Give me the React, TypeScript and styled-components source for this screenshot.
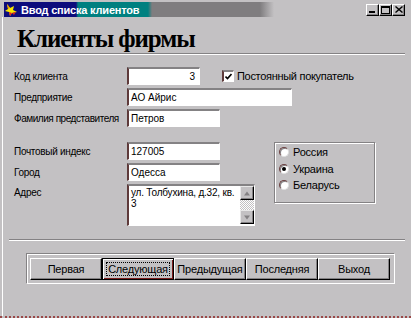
import React from "react";
import styled, { createGlobalStyle, css } from "styled-components";

const GlobalStyle = createGlobalStyle`
  html, body { margin: 0; padding: 0; background: #c3c1c3; }
  body { font-family: "Liberation Sans", Arial, sans-serif; color: #000; }
  * { box-sizing: border-box; }
`;

const Frame = styled.div`
  width: 411px;
  height: 318px;
  background: #c3c1c3;
  padding-top: 2px;
  display: flex;
  flex-direction: column;
  border-bottom: 2px dotted #9a4848;
  overflow: hidden;
`;

const TitleBar = styled.div`
  height: 15px;
  margin: 0 6px 0 4px;
  display: flex;
  align-items: center;
  background: linear-gradient(
    to right,
    #0c0c7c 0px,
    #0c0c7c 72px,
    #008080 74px,
    #008080 144px,
    #7f7d7f 148px,
    #7f7d7f 256px,
    #c3c1c3 270px
  );
`;

const TitleIcon = styled.svg`
  width: 14px;
  height: 14px;
  margin-left: 1px;
  flex: none;
`;

const TitleText = styled.span`
  color: #fff;
  font-weight: bold;
  font-size: 11px;
  margin-left: 2px;
  white-space: nowrap;
  letter-spacing: -0.2px;
`;

const WinButtons = styled.div`
  margin-left: auto;
  display: flex;
`;

const WinButton = styled.div`
  width: 13px;
  height: 12px;
  background: #c3c1c3;
  border: 1px solid;
  border-color: #fff #000 #000 #fff;
  box-shadow: inset -1px -1px 0 #848284;
  display: flex;
  align-items: center;
  justify-content: center;
`;

const Client = styled.div`
  flex: 1;
  margin-left: 2px;
  border-left: 1px solid #fff;
  display: flex;
  flex-direction: column;
`;

const Heading = styled.h1`
  margin: 8px 0 0 14px;
  font-family: "Liberation Serif", "Times New Roman", serif;
  font-weight: bold;
  font-size: 25px;
  letter-spacing: -1.1px;
  line-height: 28px;
  height: 28px;
`;

const Separator = styled.div<{ $top: number }>`
  margin: ${(p) => p.$top}px 6px 0 6px;
  height: 2px;
  border-top: 1px solid #848284;
  border-bottom: 1px solid #fff;
`;

const Form = styled.div`
  padding-left: 11px;
  margin-top: 12px;
  display: flex;
  flex-direction: column;
`;

const Rows = styled.div`
  display: flex;
  flex-direction: column;
  gap: 3px;
`;

const Row = styled.div<{ $top?: boolean }>`
  display: flex;
  align-items: ${(p) => (p.$top ? "flex-start" : "center")};
`;

const Label = styled.div<{ $pad?: number; $tight?: boolean }>`
  width: 113px;
  font-size: 10px;
  white-space: nowrap;
  letter-spacing: ${(p) => (p.$tight ? "-0.45px" : "-0.3px")};
  padding-top: ${(p) => p.$pad ?? 0}px;
`;

const sunken = css`
  background: #fff;
  border-top: 2px solid #848284;
  border-left: 2px solid #5e3a3a;
  border-right: 1px solid #fff;
  border-bottom: 1px solid #fff;
`;

const Field = styled.div<{ $w: number; $right?: boolean }>`
  ${sunken}
  width: ${(p) => p.$w}px;
  height: 18px;
  font-size: 10px;
  line-height: 15px;
  padding: 0 4px 0 2px;
  text-align: ${(p) => (p.$right ? "right" : "left")};
  white-space: nowrap;
  overflow: hidden;
`;

const CheckWrap = styled.label`
  display: flex;
  align-items: center;
  margin-left: 22px;
  font-size: 11px;
  letter-spacing: -0.3px;
  gap: 3px;
  white-space: nowrap;
`;

const CheckBox = styled.span`
  ${sunken}
  width: 12px;
  height: 12px;
  display: flex;
  align-items: center;
  justify-content: center;
`;

const Lower = styled.div`
  margin-top: 15px;
  display: flex;
  align-items: flex-start;
`;

const Memo = styled.div`
  ${sunken}
  width: 128px;
  height: 42px;
  display: flex;
`;

const MemoText = styled.div`
  flex: 1;
  font-size: 10px;
  line-height: 11px;
  padding: 1px 0 0 2px;
  white-space: pre-line;
  letter-spacing: -0.2px;
`;

const ScrollBar = styled.div`
  width: 14px;
  display: flex;
  flex-direction: column;
  margin-bottom: 1px;
`;

const ScrollBtn = styled.div`
  width: 14px;
  height: 14px;
  background: #c3c1c3;
  border: 1px solid;
  border-color: #e8e8e8 #000 #000 #e8e8e8;
  box-shadow: inset -1px -1px 0 #848284;
  display: flex;
  align-items: center;
  justify-content: center;
  flex: none;
`;

const ScrollTrack = styled.div`
  flex: 1;
  background: repeating-conic-gradient(#fff 0 25%, #c3c1c3 0 50%) 0 0 / 2px 2px;
`;

const RadioGroup = styled.div`
  margin-left: 19px;
  width: 101px;
  height: 61px;
  border: 1px solid #848284;
  box-shadow: 1px 1px 0 #fff, inset 1px 1px 0 #fff;
  padding: 1px 0 0 4px;
  display: flex;
  flex-direction: column;
`;

const RadioItem = styled.div`
  height: 16.5px;
  display: flex;
  align-items: center;
  gap: 4px;
  font-size: 11px;
  letter-spacing: -0.2px;
`;

const RadioDot = styled.span<{ $on?: boolean }>`
  width: 10px;
  height: 10px;
  border-radius: 50%;
  background: #fff;
  border: 1px solid;
  border-color: #6a4040 #e0e0e0 #e0e0e0 #6a4040;
  box-shadow: inset 1px 1px 0 #848284;
  display: flex;
  align-items: center;
  justify-content: center;
  &::after {
    content: "";
    width: 4px;
    height: 4px;
    border-radius: 50%;
    background: ${(p) => (p.$on ? "#000" : "transparent")};
  }
`;

const Panel = styled.div`
  margin: 12px 0 0 23px;
  width: 369px;
  height: 31px;
  border-top: 1px solid #848284;
  border-left: 1px solid #848284;
  border-right: 1px solid #fff;
  border-bottom: 1px solid #fff;
  box-shadow: inset 1px 1px 0 #fff;
  padding: 4px 3px 2px 3px;
  display: flex;
`;

const Button = styled.button<{ $focus?: boolean }>`
  width: 72px;
  height: 22px;
  flex: none;
  background: #c3c1c3;
  font-family: "Liberation Sans", Arial, sans-serif;
  font-size: 11px;
  letter-spacing: -0.2px;
  color: #000;
  padding: 0;
  border: 1px solid;
  border-color: #fff #000 #000 #fff;
  box-shadow: inset -1px -1px 0 #848284;
  position: relative;
  ${(p) =>
    p.$focus &&
    css`
      border: 1px solid #000;
      box-shadow: inset 1px 1px 0 #fff, inset -1px -1px 0 #7a1c1c;
      &::after {
        content: "";
        position: absolute;
        inset: 3px;
        border: 1px dotted #000;
      }
    `}
`;

const Triangle = ({ up }: { up?: boolean }) => (
  <svg width="8" height="5" viewBox="0 0 8 5">
    <polygon
      points={up ? "1,5 4,1 7,5" : "1,0 4,4 7,0"}
      fill="#848284"
      transform={up ? "translate(0,-0.5)" : "translate(0,0.5)"}
    />
  </svg>
);

export default function App() {
  return (
    <>
      <GlobalStyle />
      <Frame>
        <TitleBar>
          <TitleIcon viewBox="0 0 14 14">
            <polygon points="2,1 5,5 9,3 8,7 12,9 7,10 5,13 4,9 0,8 3,6" fill="#f8e800" />
            <polygon points="4,9 5,13 7,10 9,12 11,9 7,10" fill="#e02020" />
            <polygon points="2,1 5,5 3,6" fill="#f0a000" />
          </TitleIcon>
          <TitleText>Ввод списка клиентов</TitleText>
          <WinButtons>
            <WinButton>
              <svg width="7" height="7" viewBox="0 0 7 7">
                <rect x="0" y="5" width="6" height="2" fill="#000" />
              </svg>
            </WinButton>
            <WinButton>
              <svg width="9" height="8" viewBox="0 0 9 8">
                <rect x="0.5" y="0.5" width="8" height="7" fill="none" stroke="#000" />
                <rect x="0" y="0" width="9" height="2" fill="#000" />
              </svg>
            </WinButton>
            <WinButton>
              <svg width="8" height="7" viewBox="0 0 8 7">
                <path d="M0.5 0.5 L7.5 6.5 M7.5 0.5 L0.5 6.5" stroke="#000" strokeWidth="1.4" />
              </svg>
            </WinButton>
          </WinButtons>
        </TitleBar>
        <Client>
          <Heading>Клиенты фирмы</Heading>
          <Separator $top={0} />
          <Form>
            <Rows>
              <Row>
                <Label>Код клиента</Label>
                <Field $w={73} $right>
                  3
                </Field>
                <CheckWrap>
                  <CheckBox>
                    <svg width="7" height="7" viewBox="0 0 7 7">
                      <path d="M0.5 3.5 L2.5 5.5 L6.5 1" stroke="#000" strokeWidth="1.6" fill="none" />
                    </svg>
                  </CheckBox>
                  Постоянный покупатель
                </CheckWrap>
              </Row>
              <Row>
                <Label>Предприятие</Label>
                <Field $w={165}>АО Айрис</Field>
              </Row>
              <Row>
                <Label $tight>Фамилия представителя</Label>
                <Field $w={93}>Петров</Field>
              </Row>
            </Rows>
            <Lower>
              <Rows>
                <Row>
                  <Label>Почтовый индекс</Label>
                  <Field $w={93}>127005</Field>
                </Row>
                <Row>
                  <Label>Город</Label>
                  <Field $w={93}>Одесса</Field>
                </Row>
                <Row $top>
                  <Label $pad={3}>Адрес</Label>
                  <Memo>
                    <MemoText>{"ул. Толбухина, д.32, кв.\n3"}</MemoText>
                    <ScrollBar>
                      <ScrollBtn>
                        <Triangle up />
                      </ScrollBtn>
                      <ScrollTrack />
                      <ScrollBtn>
                        <Triangle />
                      </ScrollBtn>
                    </ScrollBar>
                  </Memo>
                </Row>
              </Rows>
              <RadioGroup>
                <RadioItem>
                  <RadioDot />
                  Россия
                </RadioItem>
                <RadioItem>
                  <RadioDot $on />
                  Украина
                </RadioItem>
                <RadioItem>
                  <RadioDot />
                  Беларусь
                </RadioItem>
              </RadioGroup>
            </Lower>
          </Form>
          <Separator $top={13} />
          <Panel>
            <Button>Первая</Button>
            <Button $focus>Следующая</Button>
            <Button>Предыдущая</Button>
            <Button>Последняя</Button>
            <Button>Выход</Button>
          </Panel>
        </Client>
      </Frame>
    </>
  );
}
